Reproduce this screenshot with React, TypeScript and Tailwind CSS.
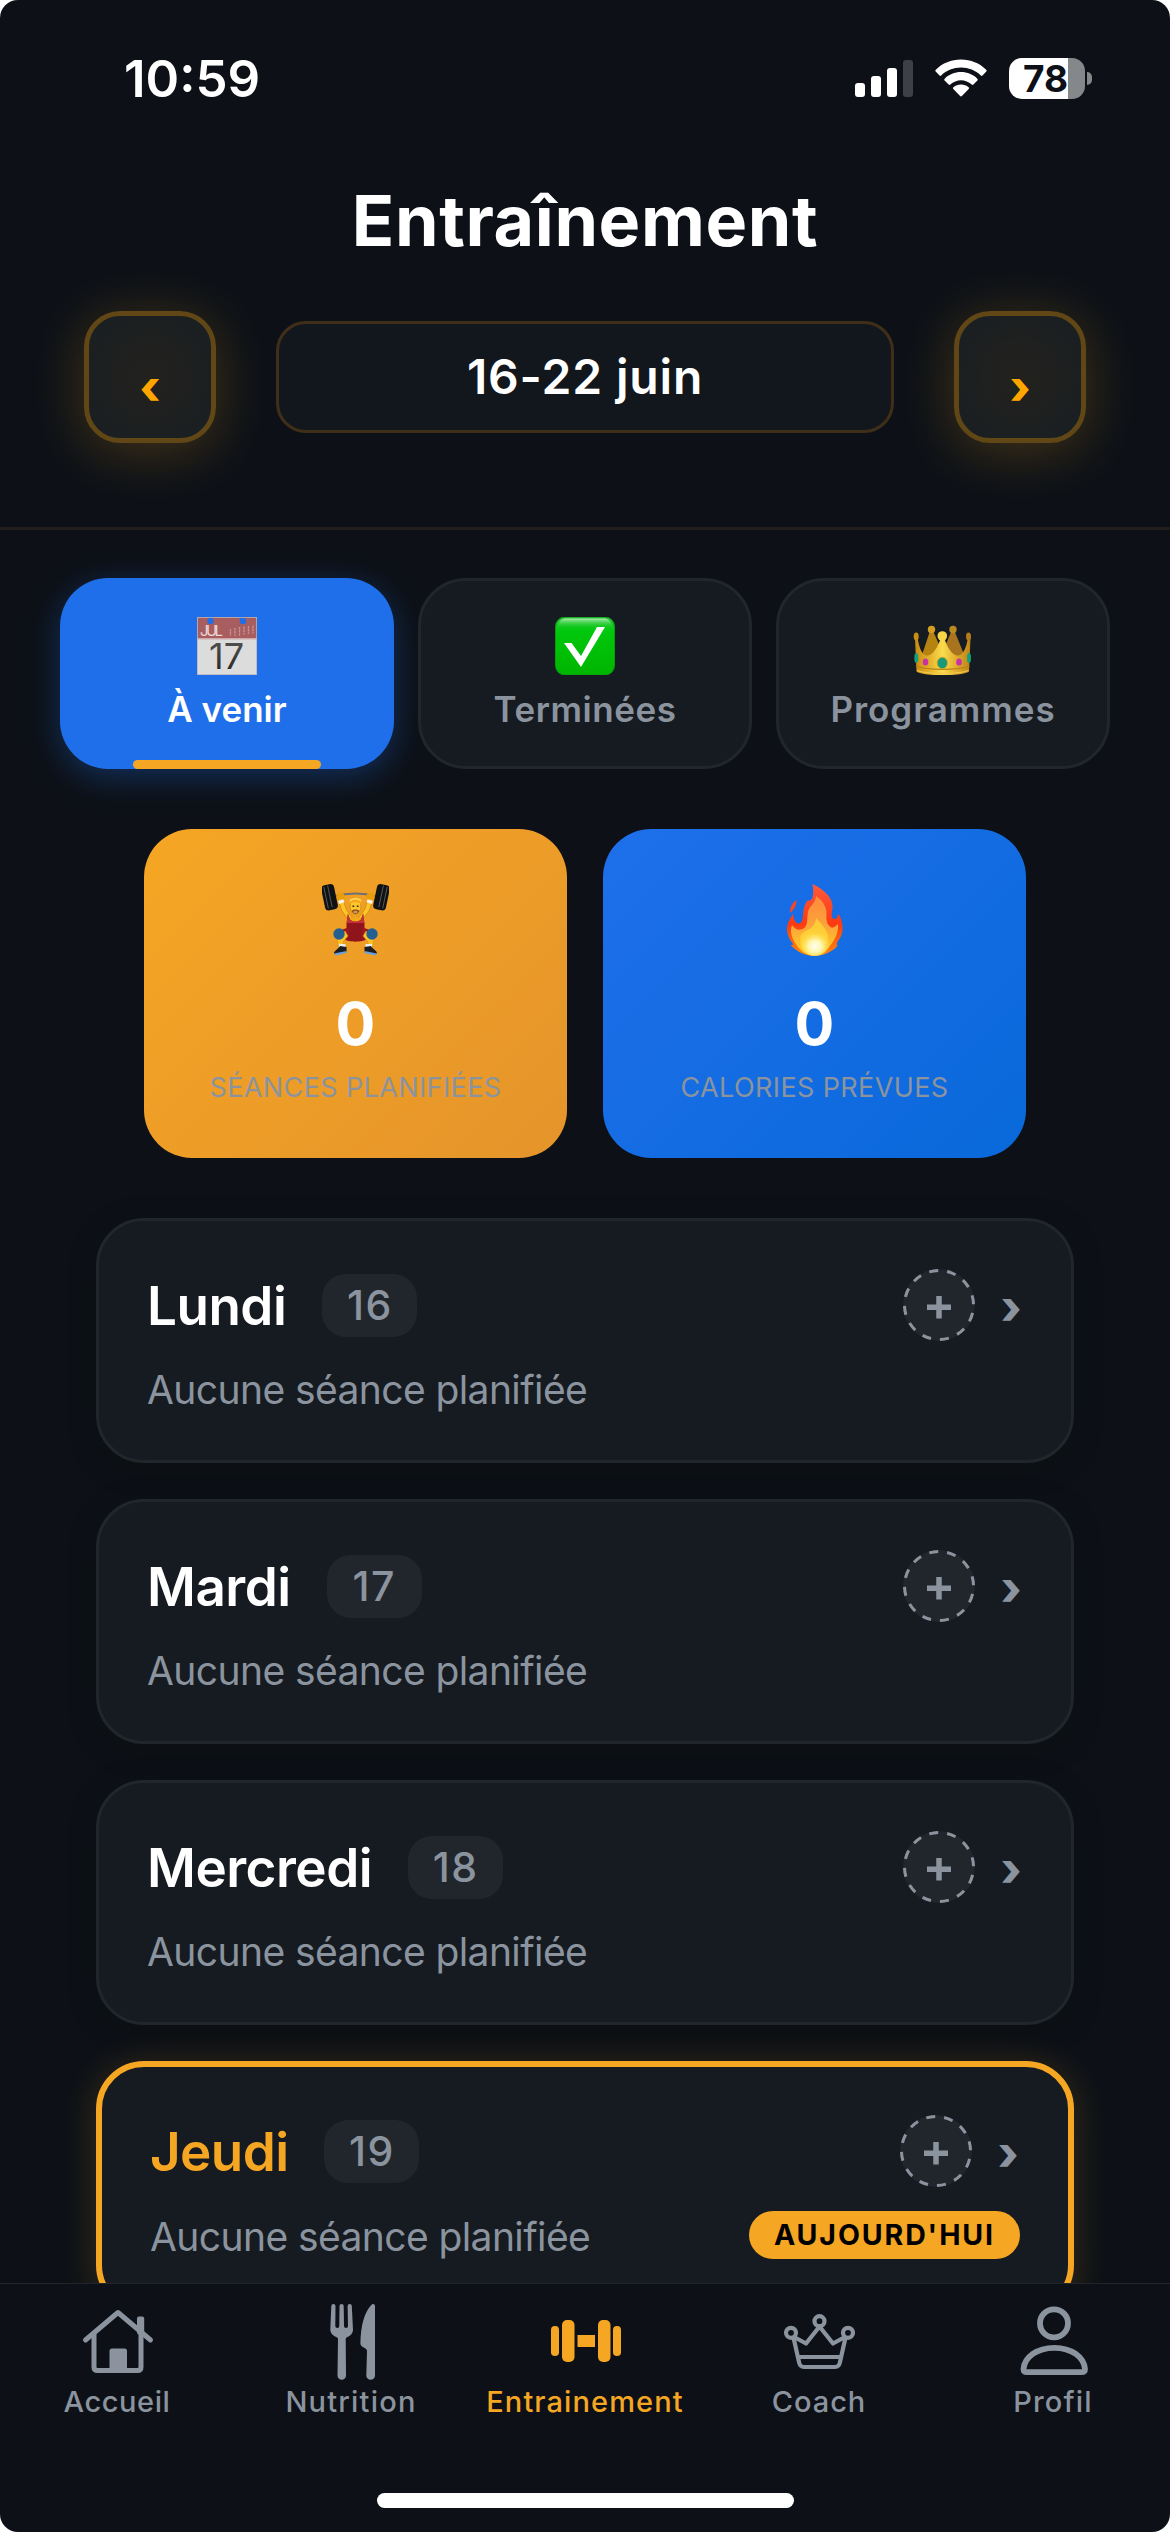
import type { ReactNode } from "react";

function SignalIcon() {
  return (
    <svg width="58" height="40" viewBox="0 0 58 40" fill="#fff">
      <rect x="0" y="25" width="10" height="14" rx="3" />
      <rect x="16" y="18" width="10" height="21" rx="3" />
      <rect x="32" y="10" width="10" height="29" rx="3" />
      <rect x="48" y="2" width="10" height="37" rx="3" fill="#3d4045" />
    </svg>
  );
}

function WifiIcon() {
  return (
    <svg width="52" height="38" viewBox="0 0 52 38" fill="#fff">
      <path d="M26 0.5C35.6 0.5 44.6 4.2 51.2 10.7c.6.6.6 1.3.1 1.9l-3.800 3.900c-.5.5-1.200.5-1.700 0C40.500 11.400 33.500 8.600 26 8.600S11.500 11.400 6.200 16.500c-.5.5-1.200.5-1.700 0L.7 12.600c-.5-.6-.5-1.300.1-1.900C7.400 4.200 16.400.5 26 .5z" />
      <path d="M26 13.100c6.200 0 12 2.400 16.300 6.600.6.6.6 1.300.1 1.800l-4 4c-.5.5-1.200.5-1.700.1-2.900-2.700-6.700-4.300-10.700-4.300s-7.800 1.600-10.700 4.300c-.5.5-1.200.4-1.700-.1l-4-4c-.5-.5-.5-1.200.1-1.800 4.300-4.200 10.100-6.600 16.300-6.600z" />
      <path d="M26 25.500c2.900 0 5.500 1 7.600 2.800.6.500.6 1.200.1 1.800l-6.800 6.900c-.5.5-1.300.5-1.800 0l-6.800-6.900c-.5-.6-.5-1.300.1-1.800 2.100-1.800 4.700-2.800 7.600-2.800z" />
    </svg>
  );
}

function Battery() {
  return (
    <div className="flex items-center gap-[2px]">
      <div className="flex h-[41px] w-[76px] items-center justify-center rounded-[13px] bg-[linear-gradient(90deg,#fff_0_59px,#85888b_59px)]">
        <span className="-ml-[3px] text-[37px] leading-[41px] font-bold text-[#0d1117]">78</span>
      </div>
      <div className="h-[13px] w-[5px] rounded-r-full bg-[#85888b]" />
    </div>
  );
}

function CalendarEmoji() {
  return (
    <svg width="60" height="58" viewBox="0 0 60 58" className="overflow-visible">
      <defs>
        <linearGradient id="calDigits" x1="0" y1="0" x2="0" y2="1">
          <stop offset="0" stopColor="#5a5a5a" />
          <stop offset="1" stopColor="#1f1f1f" />
        </linearGradient>
      </defs>
      <rect width="60" height="58" fill="#dcdcdc" />
      <rect width="60" height="21" fill="#a85e5e" />
      <rect y="21" width="60" height="1.500" fill="#cfa9a9" />
      <path d="M12.500 0h2v3h-2zM41 0h3l3 4-2 1z" fill="#1f6feb" />
      <circle cx="13.500" cy="4" r="3.200" fill="#1f6feb" />
      <circle cx="46" cy="4" r="3.200" fill="#1f6feb" />
      <text x="3" y="19.300" fontSize="15" fontFamily="Inter, sans-serif" fill="#ead6d6" textLength="23">JUL</text>
      <path d="M33.500 12v7M38 11v8M42.500 10v9M47 9.500v8M51.500 9v8M56 8.500v8" stroke="#c79393" strokeWidth="1.300" strokeDasharray="2.500 .6" />
      <text x="12" y="52" fontSize="36" fontFamily="Inter, sans-serif" fill="url(#calDigits)" textLength="35">17</text>
      <rect x=".4" y=".4" width="59.200" height="57.200" fill="none" stroke="#b9b4bb" strokeWidth=".8" />
    </svg>
  );
}

function CheckEmoji() {
  return (
    <svg width="60" height="58" viewBox="0 0 60 58">
      <defs>
        <linearGradient id="checkBg" x1="0" y1="0" x2="0" y2="1">
          <stop offset="0" stopColor="#2fc53a" />
          <stop offset=".25" stopColor="#00c80c" />
          <stop offset="1" stopColor="#00b400" />
        </linearGradient>
        <linearGradient id="checkGloss" x1="0" y1="0" x2="0" y2="1">
          <stop offset="0" stopColor="#b9f0bb" stopOpacity=".9" />
          <stop offset="1" stopColor="#19cc25" stopOpacity="0" />
        </linearGradient>
      </defs>
      <rect x=".5" width="59" height="58" rx="9.500" fill="url(#checkBg)" stroke="#0a9a12" />
      <path d="M3 11C3 4 6 1.500 12 1.500h36c6 0 8.500 2.500 9 9.500H3z" fill="url(#checkGloss)" />
      <path d="M9 26h7.500l9.500 13L42 10h8L26 50z" fill="#fff" />
    </svg>
  );
}

function CrownEmoji() {
  return (
    <svg width="60" height="58" viewBox="0 0 60 58">
      <defs>
        <linearGradient id="crownFront" x1="0" y1="0" x2="1" y2="0">
          <stop offset="0" stopColor="#c88a10" />
          <stop offset=".25" stopColor="#e2b02a" />
          <stop offset=".5" stopColor="#fbdc4e" />
          <stop offset=".75" stopColor="#dfab2b" />
          <stop offset="1" stopColor="#bd8318" />
        </linearGradient>
      </defs>
      <path d="M8 41L17 14h3l12 27z" fill="#b5830f" />
      <path d="M27 41L38.500 14h3l11 27z" fill="#a8741f" />
      <circle cx="18.500" cy="12.500" r="3.700" fill="#d39d1d" />
      <circle cx="40" cy="12.500" r="3.700" fill="#b98a24" />
      <path d="M2 21l2.500-1C6 31 9 38 13.500 38.500 19 39 24.500 32 28 20h3c3.500 12 9 19 14.500 18.500C50 38 53.500 31 55 20l2.500 1-1.500 33.500C50 59.500 9.500 59.500 3.500 54.500z" fill="url(#crownFront)" />
      <path d="M3 49c10 4.500 43 4.500 53.500 0" fill="none" stroke="#b98213" strokeWidth="1.200" />
      <path d="M4 53.500c9 3.800 42 3.800 51.500 0" fill="none" stroke="#f2c94c" strokeWidth="1.200" />
      <circle cx="29.300" cy="19" r="4.800" fill="#f7d548" />
      <ellipse cx="3.200" cy="19.500" rx="2.500" ry="4" fill="#c98f14" />
      <ellipse cx="55.500" cy="19.500" rx="2.500" ry="4" fill="#b37c18" />
      <ellipse cx="29.300" cy="46" rx="5.200" ry="5.800" fill="#169a78" stroke="#d9a520" />
      <ellipse cx="3.300" cy="41" rx="2" ry="5" fill="#12a07c" />
      <ellipse cx="56" cy="41" rx="2" ry="5" fill="#12a07c" />
      <ellipse cx="12.500" cy="45" rx="2.800" ry="3.600" fill="#c832a6" />
      <ellipse cx="46" cy="45" rx="2.800" ry="3.600" fill="#c832a6" />
    </svg>
  );
}

function LifterEmoji() {
  return (
    <svg width="67" height="72" viewBox="0 0 67 72">
      <path d="M12 12.500Q33.500 6.500 55 12.500" fill="none" stroke="#6d7078" strokeWidth="1.800" />
      <g transform="rotate(-12 7.500 13)">
        <rect x="1" y=".5" width="13" height="25.500" rx="4" fill="#101113" />
        <path d="M4 2v22M8 1.500v22" stroke="#55575b" strokeWidth="1" />
      </g>
      <g transform="rotate(12 59.500 13)">
        <rect x="53" y=".5" width="13" height="25.500" rx="4" fill="#101113" />
        <path d="M59 1.500v22M63 2v22" stroke="#55575b" strokeWidth="1" />
      </g>
      <path d="M18.500 15l3.500 11 6.500 9M48.500 15l-3.500 11-6.500 9" fill="none" stroke="#d98d0c" strokeWidth="5.400" strokeLinejoin="round" />
      <path d="M18.500 15l3.500 11 6.500 9M48.500 15l-3.500 11-6.500 9" fill="none" stroke="#fcc62a" strokeWidth="3.800" strokeLinejoin="round" />
      <path d="M16.500 18.500l5.500-1.800M50.500 18.500l-5.500-1.800" stroke="#f6f3ee" strokeWidth="3.200" />
      <rect x="14.500" y="9" width="8" height="6.500" rx="3" fill="#e99d0a" />
      <rect x="44.500" y="9" width="8" height="6.500" rx="3" fill="#e99d0a" />
      <path d="M25.500 32c5 3 11 3 16 0l-1 8h-14z" fill="#f0ac16" />
      <path d="M26 30l2 5.500c3.500 3 7.500 3 11 0l2-5.500 1.500 9v8l2.500 8c-4 3.500-19 3.500-23 0l2.500-8v-8z" fill="#8f141b" />
      <path d="M25.800 29l2 6.500c3.500 3 8 3 11.500 0l2-6.500 1 10h-17.600z" fill="#c43238" />
      <path d="M27 46l-7 2.500M40 46l7 2.500" stroke="#9d171e" strokeWidth="5.500" />
      <path d="M23 47l3 5-5 6v6h-4.500l-1.500-9zM44 47l-3 5 5 6v6h4.500l1.500-9z" fill="#fbc127" stroke="#d98d0c" strokeWidth=".6" />
      <ellipse cx="33.500" cy="22.500" rx="5.400" ry="8" fill="#fbc72e" stroke="#cf850c" strokeWidth=".7" />
      <path d="M27.300 20.500c-.7-5 2.300-7 6.200-7s6.900 2 6.200 7c-2.200-3-10.200-3-12.400 0z" fill="#f7a81b" />
      <path d="M28 17c2-3 9-3 11 0" fill="none" stroke="#ffd95c" strokeWidth="1.600" />
      <path d="M30.500 22.300h1.700M34.800 22.300h1.700" stroke="#3c240c" strokeWidth="1.600" />
      <path d="M29.500 26.500c1 4.500 7 4.500 8 0-2-1.500-6-1.500-8 0z" fill="#9c5312" />
      <path d="M31.800 28h3.400" stroke="#f4e6d8" strokeWidth="1" />
      <circle cx="17" cy="50" r="5.700" fill="#245f92" />
      <circle cx="50" cy="50" r="5.700" fill="#245f92" />
      <path d="M17 60h6.500v4H17zM43.500 60H50v4h-6.500z" fill="#e9eef3" />
      <path d="M18 62l6.500 1v5L14 70.500l-2-1c0-3 4-4 6-7.500zM49 62l-6.500 1v5L53 70.500l2-1c0-3-4-4-6-7.500z" fill="#1b1d20" />
      <path d="M12 69.500l12.500-2.500v2L14 71.500zM55 69.500L42.500 67v2L53 71.500z" fill="#6aa0d8" />
    </svg>
  );
}

function FireEmoji() {
  return (
    <svg width="56" height="72" viewBox="0 0 56 72">
      <defs>
        <linearGradient id="fireOuter" x1="0" y1="0" x2="0" y2="1">
          <stop offset="0" stopColor="#ff5a3c" />
          <stop offset=".55" stopColor="#fb3a12" />
          <stop offset="1" stopColor="#f98a12" />
        </linearGradient>
        <linearGradient id="fireInner" x1="0" y1="0" x2="0" y2="1">
          <stop offset="0" stopColor="#ff8a3c" />
          <stop offset=".5" stopColor="#fba43a" />
          <stop offset="1" stopColor="#ffd21e" />
        </linearGradient>
        <radialGradient id="fireCore" cx=".5" cy=".65" r=".55">
          <stop offset="0" stopColor="#fffef0" />
          <stop offset=".4" stopColor="#fff6b0" />
          <stop offset="1" stopColor="#ffdc2e" stopOpacity="0" />
        </radialGradient>
      </defs>
      <path d="M9.500 16C5 19 2.500 24 3.200 29 7 25.500 9.500 22 9.500 16z" fill="#f7452a" />
      <path d="M25.500 0C36 5 46.500 13 45.500 24c-.3 4-2 8 .5 10.500 3.500 1.500 5-1.500 5-5 3 4 5 10 4.500 17-.5 5-3 8.500-5 11-.5 2-.8 3 0 4.500C45 68 36 72 27 72 18 71.500 10 68 3.500 61c1.500 0 2.500-.2 3-.7C2.500 56 0 50.500 0 45c.200-6 3-10 6-15 .5 5 2 9 5.500 9.500 5-.5 4-8 5-13 .7-4 2-7.500 4-10 2 .5 4 0 5-3C26.500 9 26.500 5 25.500 0z" fill="url(#fireOuter)" />
      <path d="M29 12c6 4 11 11 10.500 18-.3 5 0 10 4 13 2.500 2 5-1 7.500-3 1 9-4 17-9 23-4 5-9 8.500-15 8.500S14 68 9.500 61C5 54.500 2.500 48 5 41c3 5 8 6 12.500 3C22 39 19 31 22 25c2-4 7-7 7-13z" fill="url(#fireInner)" />
      <path d="M29 34c5 5 10 11 12 17 1 9-5 20.500-14 20.500S11 61 14 51c3-4 6-4 10-7 3-2.500 5-6 5-10z" fill="#ffd83a" fillOpacity=".75" />
      <ellipse cx="28" cy="58" rx="15" ry="14" fill="url(#fireCore)" />
    </svg>
  );
}

function HomeIcon() {
  return (
    <svg width="78" height="78" viewBox="0 0 78 78" fill="none" stroke="currentColor" strokeLinecap="round" strokeLinejoin="round">
      <path d="M7.500 38L40 10.500 72.500 38" strokeWidth="5" />
      <path d="M16 32v33q0 3.500 3.500 3.500h40q3.500 0 3.500-3.500V32" strokeWidth="5" />
      <rect x="59" y="14.500" width="7.200" height="18" rx="2" fill="currentColor" stroke="none" />
      <path d="M31.500 69V49q0-2.500 2.500-2.500h12.500q2.500 0 2.500 2.500v20z" fill="currentColor" stroke="none" />
    </svg>
  );
}

function CutleryIcon() {
  return (
    <svg width="78" height="78" viewBox="0 0 78 78" fill="currentColor">
      <path d="M19.300 4a2.100 2.100 0 0 1 4.200 0L23.300 24q0 2 2 2t2-2L27.500 4a2.100 2.100 0 0 1 4.200 0L32 24q0 2 2 2t2-2L35.600 4a2.100 2.100 0 0 1 4.200 0L41 28q0 4.500-6.500 7.500-.8.700-.8 2L34 73.500a4.200 4.200 0 0 1-8.500 0L26 37.500q0-1.300-.8-2Q18.300 32.500 18.300 28z" />
      <path d="M60 2.200q3-.7 3 2V73.500a4.300 4.300 0 0 1-8.700 0L55 49q0-1.500-1.200-2.300L50 44.500q-1.800-1.200-1.600-3.500C48.800 24 52 10 60 2.200z" />
    </svg>
  );
}

function DumbbellIcon() {
  return (
    <svg width="78" height="78" viewBox="0 0 78 78" fill="currentColor">
      <rect x="5" y="24" width="8" height="30" rx="3.800" />
      <rect x="16" y="18" width="12.500" height="42" rx="5" />
      <rect x="31.500" y="33" width="17.500" height="12" />
      <rect x="52" y="18" width="12.500" height="42" rx="5" />
      <rect x="67" y="24" width="8" height="30" rx="3.800" />
    </svg>
  );
}

function CrownIcon() {
  return (
    <svg width="78" height="78" viewBox="0 0 78 78" fill="none" stroke="currentColor" strokeWidth="4.200" strokeLinejoin="round">
      <circle cx="11" cy="30.800" r="5" />
      <circle cx="39.500" cy="19.200" r="5" />
      <circle cx="68" cy="30.800" r="5" />
      <path d="M13.500 35.500L19 60q.8 5 5 5h31q4.200 0 5-5l5.500-24.500" />
      <path d="M15 35.500L26 41.500 39.500 24.500 53 41.500 64 35.500" />
      <path d="M18.500 55h42" />
    </svg>
  );
}

function ProfileIcon() {
  return (
    <svg width="78" height="78" viewBox="0 0 78 78" fill="none" stroke="currentColor" strokeWidth="5.800" strokeLinejoin="round">
      <circle cx="40" cy="21.300" r="14" />
      <path d="M9.500 67C10.500 55 23 45.800 40.300 45.800S70 55 71 67q0 3.200-3.500 3.200H13Q9.500 70.200 9.500 67z" />
    </svg>
  );
}

function WeekButton({ children }: { children: ReactNode }) {
  return (
    <button className="flex size-[132px] items-center justify-center rounded-[36px] border-[5px] border-[#614715] bg-[radial-gradient(circle,#22211e_0%,#1f201f_40%,#1a1f22_85%)] pt-[19px] text-[47px] leading-none font-extrabold text-[#ffa500] shadow-[0_8px_54px_rgba(245,166,35,0.24)]">
      {children}
    </button>
  );
}

const tabs = [
  { label: "À venir", icon: <CalendarEmoji />, text: "tracking-[0px] text-white", active: true },
  { label: "Terminées", icon: <CheckEmoji />, text: "tracking-[0.53px] text-[#8b949e]", active: false },
  { label: "Programmes", icon: <CrownEmoji />, text: "tracking-[0.97px] text-[#8b949e]", active: false },
];

const stats = [
  { label: "SÉANCES PLANIFIÉES", icon: <LifterEmoji />, bg: "bg-[linear-gradient(135deg,#f5a623,#e5942b)]" },
  { label: "CALORIES PRÉVUES", icon: <FireEmoji />, bg: "bg-[linear-gradient(135deg,#1f6feb,#0969da)]" },
];

const days = [
  { name: "Lundi", date: "16", today: false },
  { name: "Mardi", date: "17", today: false },
  { name: "Mercredi", date: "18", today: false },
  { name: "Jeudi", date: "19", today: true },
];

const navItems = [
  { label: "Accueil", icon: <HomeIcon />, style: "tracking-[0.57px] text-[#8b949e]" },
  { label: "Nutrition", icon: <CutleryIcon />, style: "tracking-[1.21px] text-[#8b949e]" },
  { label: "Entrainement", icon: <DumbbellIcon />, style: "tracking-[1.1px] text-[#f5a623]" },
  { label: "Coach", icon: <CrownIcon />, style: "tracking-[0.93px] text-[#8b949e]" },
  { label: "Profil", icon: <ProfileIcon />, style: "tracking-[1.16px] text-[#8b949e]" },
];

function DayCard({ name, date, today }: { name: string; date: string; today: boolean }) {
  return (
    <article
      className={
        today
          ? "shrink-0 rounded-[48px] border-[6px] border-[#f5a623] bg-[#161b22] p-12 shadow-[0_4px_36px_rgba(245,166,35,0.2)]"
          : "shrink-0 rounded-[48px] border-[3px] border-[#21262d] bg-[#161b22] p-12 shadow-[0_6px_24px_rgba(13,16,16,0.8)]"
      }
    >
      <div className="flex h-[72px] items-center">
        <h2
          className={
            today
              ? "pt-px text-[53px] leading-[64px] font-semibold tracking-[-0.6px] text-[#f5a623]"
              : "pt-px text-[53px] leading-[64px] font-semibold tracking-[-0.5px] text-white"
          }
        >
          {name}
        </h2>
        <span className="ml-[36px] flex h-[63px] w-[95px] items-center justify-center rounded-[24px] bg-[#21262d] text-[41px] leading-none font-medium tracking-[1.5px] text-[#8b949e]">
          {date}
        </span>
        <button className="ml-auto flex size-[72px] items-center justify-center rounded-full bg-[#21262d] text-[#8b949e]">
          <svg width="72" height="72" viewBox="0 0 72 72" fill="none" stroke="currentColor">
            <circle cx="36" cy="36" r="34.500" strokeWidth="3" strokeDasharray="9.030 9.030" strokeDashoffset="-8" />
            <path d="M36 27v22.500M24 38.300h24" strokeWidth="5.500" />
          </svg>
        </button>
        <span className="ml-6 flex w-6 justify-center pt-[2px] text-[47px] leading-none font-extrabold text-[#8b949e]">›</span>
      </div>
      <div className={today ? "mt-6 flex h-[48px] items-center justify-between" : "mt-6 flex h-[47px] items-center"}>
        <p className="pt-[2px] text-[39px] leading-[45px] tracking-[-0.59px] text-[#8b949e]">Aucune séance planifiée</p>
        {today && (
          <span className="flex h-[48px] w-[271px] items-center justify-center rounded-[24px] bg-[#f5a623] pt-px text-[28.500px] leading-none font-bold tracking-[1.9px] text-black">
            AUJOURD'HUI
          </span>
        )}
      </div>
    </article>
  );
}

export default function App() {
  return (
    <div className="w-[1170px] bg-white">
      <div className="flex h-[2532px] w-[1170px] flex-col overflow-hidden rounded-[18px] bg-[#0d1117] font-['Inter',sans-serif]">
        <header className="shrink-0 border-b-[3px] border-[#221f1a]">
          <div className="flex h-[156px] items-center justify-between pr-[78px] pl-[124px]">
            <time className="text-[51px] leading-none font-semibold text-white">10:59</time>
            <div className="flex items-center gap-[22px]">
              <SignalIcon />
              <WifiIcon />
              <Battery />
            </div>
          </div>
          <h1 className="text-center text-[70px] leading-[129px] font-bold tracking-[0.61px] text-white">Entraînement</h1>
          <div className="flex items-center gap-[60px] px-[84px] pt-[26px] pb-[84px]">
            <WeekButton>‹</WeekButton>
            <div className="flex h-[112px] flex-1 items-center justify-center rounded-[30px] border-[3px] border-[#402f18] bg-[#12171d] text-[48px] leading-none font-semibold tracking-[0.83px] text-white">
              16-22 juin
            </div>
            <WeekButton>›</WeekButton>
          </div>
        </header>

        <main className="flex min-h-0 flex-1 flex-col overflow-hidden pt-12">
          <div className="grid shrink-0 grid-cols-3 gap-6 px-[60px]">
            {tabs.map((tab) => (
              <button
                key={tab.label}
                className={
                  tab.active
                    ? "relative flex h-[191px] flex-col items-center rounded-[48px] bg-[#1f6feb] pt-[39px] shadow-[0_8px_32px_rgba(31,111,235,0.32)]"
                    : "relative flex h-[191px] flex-col items-center rounded-[48px] border-[3px] border-[#21262d] bg-[#161b22] pt-[36px]"
                }
              >
                {tab.icon}
                <span className={`mt-[13px] text-[35px] leading-[43px] font-semibold ${tab.text}`}>{tab.label}</span>
                {tab.active && <span className="absolute bottom-0 left-[73px] h-[9px] w-[188px] rounded-[5px] bg-[#f5a623]" />}
              </button>
            ))}
          </div>

          <div className="mt-[60px] grid shrink-0 grid-cols-2 gap-9 px-[144px]">
            {stats.map((stat) => (
              <section key={stat.label} className={`flex h-[329px] flex-col items-center rounded-[48px] pt-[55px] ${stat.bg}`}>
                {stat.icon}
                <strong className="mt-8 text-[59px] leading-[72px] font-bold text-white">0</strong>
                <span className="mt-[12px] text-[27px] leading-8 tracking-[0.38px] text-[#8b949e]">{stat.label}</span>
              </section>
            ))}
          </div>

          <div className="mt-[60px] flex flex-col gap-9 px-24">
            {days.map((day) => (
              <DayCard key={day.name} {...day} />
            ))}
          </div>
        </main>

        <nav className="flex h-[249px] shrink-0 flex-col items-center border-t border-[#21262d] pt-[18px] pb-6">
          <div className="grid w-full grid-cols-5">
            {navItems.map((item) => (
              <a key={item.label} className={`flex flex-col items-center text-[29px] leading-[37px] font-medium ${item.style}`}>
                {item.icon}
                <span className="mt-[3px]">{item.label}</span>
              </a>
            ))}
          </div>
          <div className="mt-auto h-[15px] w-[417px] rounded-full bg-white" />
        </nav>
      </div>
    </div>
  );
}
